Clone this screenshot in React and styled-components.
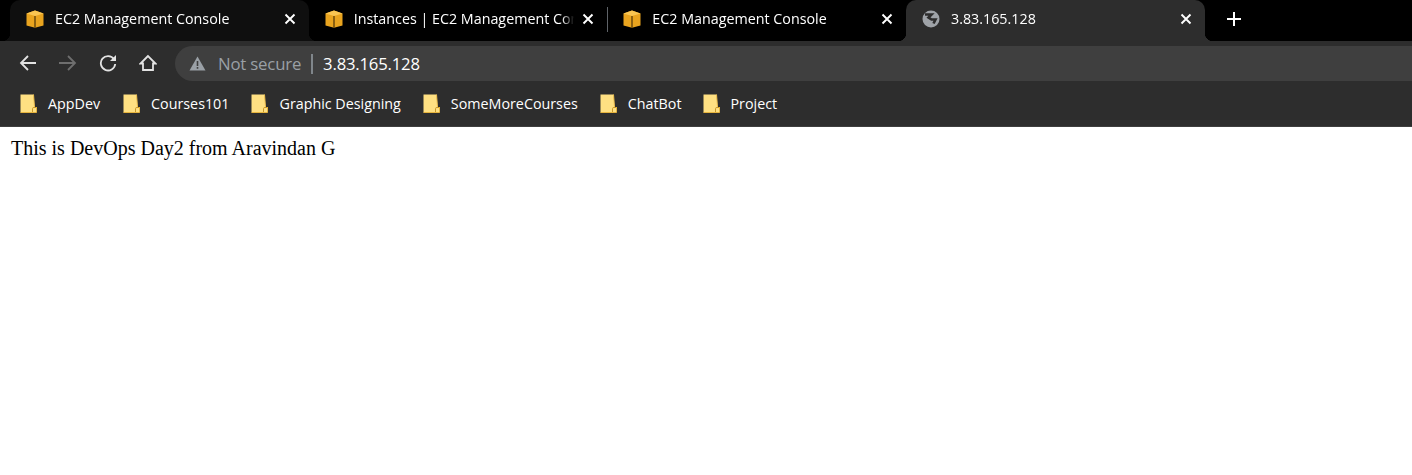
import styled, { createGlobalStyle } from "styled-components";

const GlobalStyle = createGlobalStyle`
  html, body {
    margin: 0;
    padding: 0;
    background: #fff;
  }
`;

const TABS = [
  { title: "EC2 Management Console", icon: "aws", variant: "hover" },
  { title: "Instances | EC2 Management Console", icon: "aws", divider: true },
  { title: "EC2 Management Console", icon: "aws" },
  { title: "3.83.165.128", icon: "globe", variant: "active" },
];

const BOOKMARKS = [
  { label: "AppDev", gap: 23 },
  { label: "Courses101", gap: 22 },
  { label: "Graphic Designing", gap: 22 },
  { label: "SomeMoreCourses", gap: 22 },
  { label: "ChatBot", gap: 21 },
  { label: "Project", gap: 0 },
];

const tabBackgrounds = {
  active: "#2d2d2d",
  hover: "#0f0f0f",
};

const Page = styled.div`
  width: 1412px;
  height: 475px;
  overflow: hidden;
  background: #fff;
`;

const TabStrip = styled.div`
  display: flex;
  align-items: flex-end;
  height: 41px;
  padding-left: 10px;
  background: #000;
`;

const Tab = styled.div`
  position: relative;
  display: flex;
  align-items: center;
  width: 298.67px;
  height: 41px;
  padding: 0 13px 3px 16px;
  box-sizing: border-box;
  border-radius: 10px 10px 0 0;
  background: ${({ $variant }) => tabBackgrounds[$variant] || "transparent"};

  ${({ $variant }) =>
    $variant &&
    `
    &::before, &::after {
      content: "";
      position: absolute;
      bottom: 0;
      width: 8px;
      height: 8px;
    }
    &::before {
      left: -8px;
      background: radial-gradient(circle at 0 0, transparent 8px, ${tabBackgrounds[$variant]} 8.5px);
    }
    &::after {
      right: -8px;
      background: radial-gradient(circle at 100% 0, transparent 8px, ${tabBackgrounds[$variant]} 8.5px);
    }
  `}

  ${({ $divider }) =>
    $divider &&
    `
    &::after {
      content: "";
      position: absolute;
      right: -1px;
      top: 7px;
      width: 1px;
      height: 25px;
      background: #5f6368;
    }
  `}
`;

const TabTitle = styled.span`
  flex: 1;
  min-width: 0;
  margin-left: 11px;
  overflow: hidden;
  white-space: nowrap;
  color: #fff;
  font: 14.3px/20px "Open Sans", sans-serif;
  mask-image: linear-gradient(to right, #000 calc(100% - 14px), transparent calc(100% - 2px));
`;

const CloseIcon = styled.svg`
  flex: none;
  width: 12px;
  height: 12px;
  margin-left: 6px;
`;

const NewTab = styled.svg`
  flex: none;
  width: 16px;
  height: 16px;
  margin: 0 0 3px 21px;
  align-self: center;
`;

const Toolbar = styled.div`
  display: flex;
  align-items: center;
  height: 40px;
  padding: 5px 0 0 19px;
  box-sizing: border-box;
  background: #2d2d2d;
`;

const NavIcon = styled.svg`
  flex: none;
  width: 18px;
  height: 18px;
  margin-right: 22px;
  margin-bottom: 2px;
`;

const Omnibox = styled.div`
  display: flex;
  align-items: center;
  flex: 1;
  height: 35px;
  margin-left: -4px;
  margin-right: -20px;
  padding-left: 14px;
  border-radius: 18px 0 0 18px;
  background: #3f3f3f;
`;

const WarnIcon = styled.svg`
  flex: none;
  width: 17px;
  height: 15px;
`;

const NotSecure = styled.span`
  margin-left: 12px;
  color: #9aa0a6;
  font: 16.8px/22px "Open Sans", sans-serif;
  letter-spacing: -0.2px;
`;

const UrlDivider = styled.span`
  width: 1.5px;
  height: 20px;
  margin: 0 10.5px 0 10px;
  background: #80868b;
`;

const Url = styled.span`
  color: #fff;
  font: 16.7px/22px "Open Sans", sans-serif;
  letter-spacing: -0.2px;
`;

const BookmarkBar = styled.div`
  display: flex;
  align-items: center;
  height: 46px;
  padding: 0 0 0 20px;
  box-sizing: border-box;
  border-bottom: 1px solid #3e3e3e;
  background: #2d2d2d;
`;

const Bookmark = styled.div`
  display: flex;
  align-items: center;
  margin-right: ${({ $gap }) => $gap}px;
`;

const BookmarkLabel = styled.span`
  margin-left: 11px;
  color: #fff;
  font: 14.3px/20px "Open Sans", sans-serif;
`;

const Content = styled.p`
  margin: 0;
  padding: 10px 11px;
  color: #000;
  font: 20px/22px "Liberation Serif", serif;
`;

const IconSvg = styled.svg`
  flex: none;
`;

const AwsIcon = () => (
  <IconSvg width="18" height="18" viewBox="0 0 18 18">
    <path d="M9 0.5 17.5 3.5V15.5L9 17.8 0.5 15.5V3.5Z" fill="#e9a41f" />
    <path d="M9 0.5 17.5 3.5 9 6 0.5 3.5Z" fill="#f9c552" />
    <path d="M9 6V17.8" stroke="#5a3c08" strokeWidth="1.3" />
  </IconSvg>
);

const GlobeIcon = () => (
  <IconSvg width="18" height="18" viewBox="0 0 18 18">
    <circle cx="9" cy="9" r="8.5" fill="#9fa3a8" />
    <path
      d="M3 4.5H9.5L6.5 7.5 9.5 9.5H13.5L11.5 13.5"
      stroke="#2d2d2d"
      strokeWidth="2.6"
      fill="none"
    />
  </IconSvg>
);

const FolderIcon = () => (
  <IconSvg width="17" height="19" viewBox="0 0 17 19">
    <path d="M0.5 0.5H13.5L14.5 13H16.5V18.5H0.5Z" fill="#ffe082" />
    <path d="M13.5 0.5 14.5 13" stroke="#f2c14e" fill="none" />
    <path d="M0.5 18.5H16.5V13" stroke="#e7b53e" fill="none" />
    <path d="M12.5 18V14.5Q12.5 13.5 14 13.5H16" stroke="#c9982a" fill="none" />
  </IconSvg>
);

const App = () => {
  return (
    <Page>
      <GlobalStyle />
      <TabStrip>
        {TABS.map((tab, i) => (
          <Tab key={i} $variant={tab.variant} $divider={tab.divider}>
            {tab.icon === "aws" ? <AwsIcon /> : <GlobeIcon />}
            <TabTitle>{tab.title}</TabTitle>
            <CloseIcon viewBox="0 0 12 12">
              <path d="M1.5 1.5 10.5 10.5M10.5 1.5 1.5 10.5" stroke="#fff" strokeWidth="1.9" />
            </CloseIcon>
          </Tab>
        ))}
        <NewTab viewBox="0 0 16 16">
          <path d="M8 1V15M1 8H15" stroke="#fff" strokeWidth="2" />
        </NewTab>
      </TabStrip>
      <Toolbar>
        <NavIcon viewBox="0 0 18 18">
          <path d="M17 9H2M9 2 2 9 9 16" stroke="#e3e3e3" strokeWidth="1.8" fill="none" />
        </NavIcon>
        <NavIcon viewBox="0 0 18 18">
          <path d="M0 9H16M9 2 16 9 9 16" stroke="#6e6e6e" strokeWidth="1.8" fill="none" />
        </NavIcon>
        <NavIcon viewBox="0 0 18 18">
          <path d="M15 5.2A7.2 7.2 0 1 0 16.2 10" stroke="#e3e3e3" strokeWidth="1.8" fill="none" />
          <path d="M17 1V7H11Z" fill="#e3e3e3" />
        </NavIcon>
        <NavIcon viewBox="0 0 18 18">
          <path d="M9 2 1.5 9.5H4V16H14V9.5H16.5Z" stroke="#e3e3e3" strokeWidth="1.8" fill="none" />
        </NavIcon>
        <Omnibox>
          <WarnIcon viewBox="0 0 17 15">
            <path d="M8.5 0.5 16.5 14.5H0.5Z" fill="#9aa0a6" />
            <path d="M7.7 5H9.3V10H7.7ZM7.7 11H9.3V12.7H7.7Z" fill="#3f3f3f" />
          </WarnIcon>
          <NotSecure>Not secure</NotSecure>
          <UrlDivider />
          <Url>3.83.165.128</Url>
        </Omnibox>
      </Toolbar>
      <BookmarkBar>
        {BOOKMARKS.map((b) => (
          <Bookmark key={b.label} $gap={b.gap}>
            <FolderIcon />
            <BookmarkLabel>{b.label}</BookmarkLabel>
          </Bookmark>
        ))}
      </BookmarkBar>
      <Content>This is DevOps Day2 from Aravindan G</Content>
    </Page>
  );
};

export default App;
